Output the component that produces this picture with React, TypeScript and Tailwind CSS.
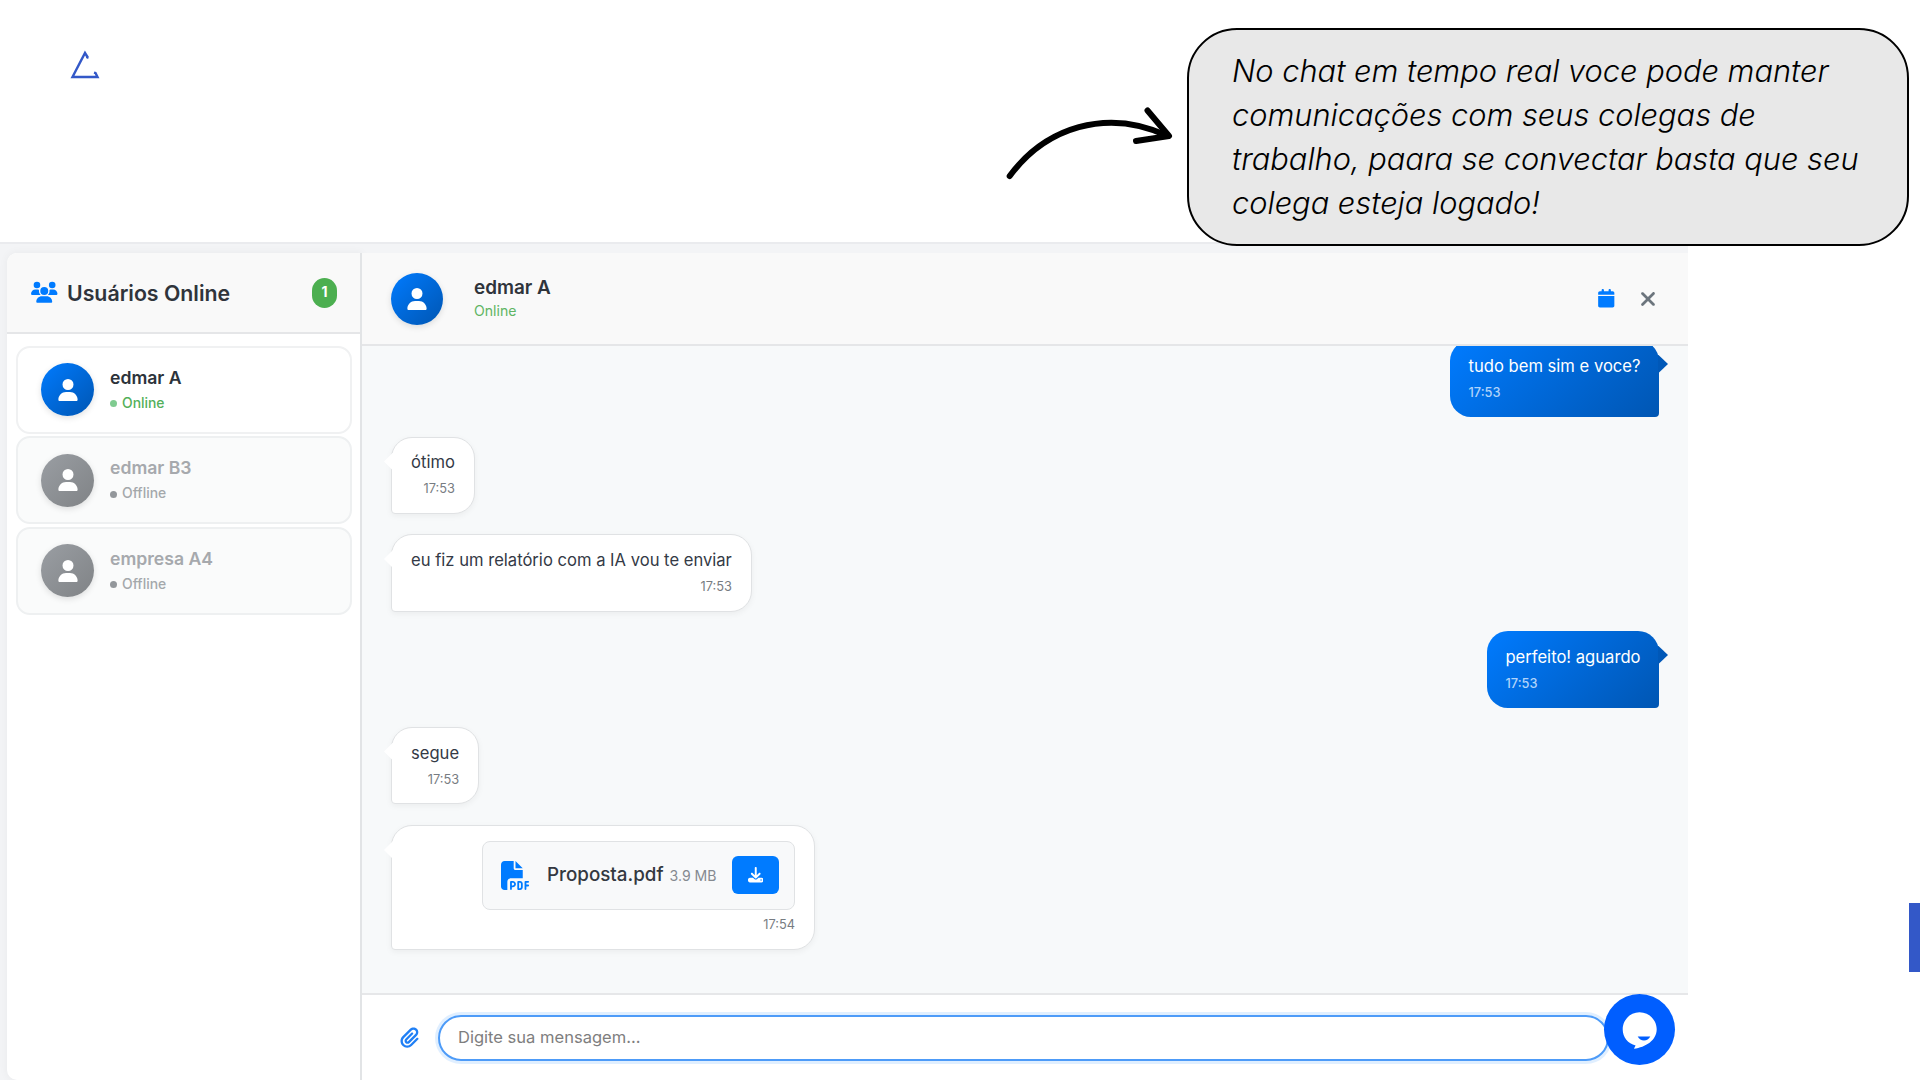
import type { ReactNode } from "react";
import { FaUsers, FaUser, FaCalendar, FaXmark, FaFilePdf, FaDownload, FaPaperclip } from "react-icons/fa6";

type User = { name: string; online: boolean };

const users: User[] = [
  { name: "edmar A", online: true },
  { name: "edmar B3", online: false },
  { name: "empresa A4", online: false },
];

function Avatar({ offline = false, className = "" }: { offline?: boolean; className?: string }) {
  const tone = offline
    ? "bg-linear-135 from-[#9a9ea3] to-[#808386]"
    : "bg-linear-135 from-[#007bff] to-[#0056b3]";
  return (
    <div
      className={`flex shrink-0 items-center justify-center rounded-full text-[22px] text-white shadow-[0_2px_6px_rgba(0,0,0,0.12)] ${tone} ${className}`}
    >
      <FaUser />
    </div>
  );
}

function UserCard({ name, online }: User) {
  return (
    <li
      className={`flex h-[88px] items-center rounded-[14px] border-2 pl-[23px] ${
        online ? "border-[#f0f1f2] bg-white" : "border-[#eef0f1] bg-[#fafbfb]"
      }`}
    >
      <Avatar offline={!online} className="size-[53px]" />
      <div className="ml-[16px] flex flex-col">
        <span
          className={`text-[17.6px] leading-[22px] font-semibold ${online ? "text-[#2c333a]" : "text-[#a6a9ad]"}`}
        >
          {name}
        </span>
        <span
          className={`mt-[4px] flex items-center gap-[5px] text-[13.9px] leading-5 font-medium ${
            online ? "text-[#53b05a]" : "text-[#a4a8ab]"
          }`}
        >
          <i className={`mt-[2px] size-[7px] rounded-full ${online ? "bg-[#7fcb90]" : "bg-[#93979b]"}`} />
          {online ? "Online" : "Offline"}
        </span>
      </div>
    </li>
  );
}

function Received({ children, time, className = "" }: { children: ReactNode; time: string; className?: string }) {
  return (
    <div
      className={`relative flex shrink-0 flex-col items-end self-start rounded-[21px] rounded-bl-[4px] border-[1.5px] border-[#e0e2e4] bg-white pr-[19px] pl-[19px] shadow-[0_2px_6px_rgba(0,0,0,0.05)] ${className}`}
    >
      <span className="absolute top-[15px] -left-[8px] h-[18px] w-[9px] bg-white [clip-path:polygon(0_50%,100%_0,100%_100%)]" />
      {children}
      <span className="text-[12.8px] leading-4 text-[#777c82]">{time}</span>
    </div>
  );
}

function Sent({ text, time, className = "" }: { text: string; time: string; className?: string }) {
  return (
    <div
      className={`relative flex h-[77px] shrink-0 flex-col items-start self-end rounded-[21px] rounded-br-[4px] bg-linear-135 from-[#007bff] to-[#0056b3] px-[18.5px] pt-[14px] ${className}`}
    >
      <span className="absolute top-[15px] -right-[9px] h-[19px] w-[10px] bg-[#0058b8] [clip-path:polygon(100%_50%,0_0,0_100%)]" />
      <span className="text-[16.6px] leading-6 text-white">{text}</span>
      <span className="mt-[7px] text-[12.8px] leading-4 font-medium text-[#b0d3fa]">{time}</span>
    </div>
  );
}

function Text({ children }: { children: string }) {
  return <span className="mb-[7px] text-[16.6px] leading-6 text-[#343a46]">{children}</span>;
}

export default function App() {
  return (
    <div className="relative flex h-[1080px] w-[1920px] flex-col overflow-hidden bg-white font-['Inter',sans-serif]">
      <header className="relative z-10 flex h-[242px] shrink-0 items-start">
        <svg className="mt-[48px] ml-[68px]" width="34" height="34" viewBox="68 48 34 34" fill="none" stroke="#3358c8" strokeWidth="2.4">
          <path d="M87 58.5L87.5 57L85 53L72.5 77H97.5L95.5 73L94 72.6" />
        </svg>
        <svg className="mt-[101px] ml-[898px]" width="180" height="90" viewBox="1000 101 180 90" fill="none" stroke="#000" strokeWidth="6" strokeLinecap="round" strokeLinejoin="round">
          <path d="M1009.7 176C1045 128 1106 107 1168 136" />
          <path d="M1147.5 110.5L1169 136L1136 141" />
        </svg>
        <p className="mt-[28px] ml-[6.5px] h-[217.5px] w-[722px] rounded-[50px] border-2 border-black bg-[#e8e8e8] pt-[19px] pl-[43.5px] text-[30.77px] leading-[44px] font-light text-black italic">
          No chat em tempo real voce pode manter
          <br />
          comunicações com seus colegas de
          <br />
          trabalho, paara se convectar basta que seu
          <br />
          colega esteja logado!
        </p>
      </header>

      <main className="relative flex min-h-0 w-[1688px] flex-1 border-t-2 border-[#eaebee] bg-[#f3f4f6] pt-[9px] pl-[7px]">
        <aside className="flex w-[355px] shrink-0 flex-col rounded-l-[10px] border-r-2 border-[#e2e4e6] bg-white shadow-[0_0_10px_rgba(0,0,0,0.05)]">
          <div className="flex h-[81px] shrink-0 items-center rounded-tl-[10px] border-b-2 border-[#e5e6e8] bg-[#f9f9f9] pr-[23px] pl-[24px]">
            <FaUsers className="text-[26.5px] text-[#007bff]" />
            <h1 className="ml-[9.5px] text-[21.3px] leading-7 font-semibold text-[#2f343b]">Usuários Online</h1>
            <span className="ml-auto flex h-[30px] w-[25px] items-start justify-center rounded-full bg-[#4caf50] pt-[5px] text-[14px] leading-[18px] font-bold text-white">
              1
            </span>
          </div>
          <ul className="flex flex-col gap-[2.5px] pt-[11.5px] pr-[8.5px] pl-[9px]">
            {users.map((u) => (
              <UserCard key={u.name} {...u} />
            ))}
          </ul>
        </aside>

        <section className="flex min-w-0 flex-1 flex-col">
          <div className="flex h-[93px] shrink-0 items-center border-b-2 border-[#e5e6e8] bg-[#f9f9f9] pr-[29px] pl-[29px]">
            <Avatar className="size-[52px]" />
            <div className="ml-[31px] flex flex-col pt-px">
              <span className="text-[18.9px] leading-6 font-semibold text-[#2f343b]">edmar A</span>
              <span className="text-[14.1px] leading-[22px] text-[#5fb564]">Online</span>
            </div>
            <FaCalendar className="ml-auto text-[18.5px] text-[#007bff]" />
            <FaXmark className="ml-[22px] text-[22px] text-[#6c757d]" />
          </div>

          <div className="flex min-h-0 flex-1 flex-col justify-end gap-[20px] overflow-hidden bg-[#f7f9fa] px-[29px] pb-[43px]">
            <Sent text="tudo bem sim e voce?" time="17:53" />
            <Received time="17:53" className="h-[77.5px] pt-[12.5px]">
              <Text>ótimo</Text>
            </Received>
            <Received time="17:53" className="-mb-px h-[77.5px] pt-[13px]">
              <Text>eu fiz um relatório com a IA vou te enviar</Text>
            </Received>
            <Sent text="perfeito! aguardo" time="17:53" className="-mb-px" />
            <Received time="17:53" className="mb-px h-[77.5px] pt-[13px]">
              <Text>segue</Text>
            </Received>
            <Received time="17:54" className="h-[125px] w-[424px] pt-[14.5px]">
              <div className="mb-[7px] flex h-[69px] w-[313px] items-center rounded-[8px] border-[1.5px] border-[#e0e2e4] bg-[#f8f9fa] pr-[15px] pl-[18px]">
                <FaFilePdf className="shrink-0 text-[29px] text-[#007bff]" />
                <span className="ml-[17px] pt-px text-[18.8px] font-medium text-[#333840]">Proposta.pdf</span>
                <span className="ml-[6px] pt-[2px] text-[14.1px] whitespace-nowrap text-[#858a90]">3.9 MB</span>
                <span className="ml-auto flex h-[38px] w-[47px] shrink-0 items-center justify-center rounded-[6px] bg-[#007bff] text-[15.5px] text-white">
                  <FaDownload />
                </span>
              </div>
            </Received>
          </div>

          <div className="flex h-[87px] shrink-0 items-center border-t-2 border-[#e6e7e9] bg-white pl-[37px]">
            <FaPaperclip className="text-[21px] text-[#1f7ff5]" />
            <div className="ml-[18px] flex h-[46px] w-[1171px] items-center rounded-full border-2 border-[#4d9bf8] bg-white pl-[18px] text-[16.55px] text-[#7e7e7e] shadow-[0_0_0_3px_rgba(0,123,255,0.12)]">
              Digite sua mensagem...
            </div>
          </div>
        </section>
      </main>

      <button className="absolute top-[994px] left-[1604px] z-20 size-[71px] rounded-full bg-[#005eff]">
        <svg width="71" height="71" viewBox="0 0 71 71">
          <path
            d="M35.5 18.3C45 18.3 52.7 26 52.7 35.3C52.7 46.5 41.5 53.3 30 54.8C30.4 53.6 30.8 52.7 31.6 51.4C24 50 18.7 43.2 18.7 35.3C18.7 26 26.2 18.3 35.5 18.3Z"
            fill="#fff"
          />
          <path d="M33.7 42.6H46.3C44.8 45.3 42.8 46.6 40 46.6C37.2 46.6 35.2 45.3 33.7 42.6Z" fill="#005eff" />
        </svg>
      </button>
      <div className="absolute top-[903px] right-0 h-[69px] w-[11px] bg-[#3358c8]" />
    </div>
  );
}
